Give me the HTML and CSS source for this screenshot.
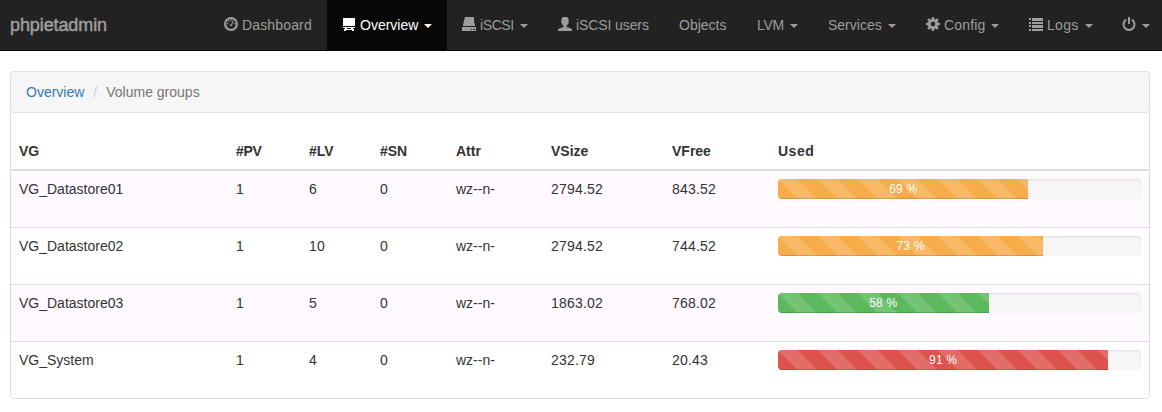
FILE: index.html
```html
<!DOCTYPE html>
<html lang="en">
<head>
<meta charset="utf-8">
<title>phpietadmin</title>
<link rel="stylesheet" href="styles.css">
</head>
<body>
<nav class="navbar">
  <a class="brand">phpietadmin</a>
  <ul class="nav">
    <li class="item w-dashboard"><svg class="icon" viewBox="0 0 14 14"><circle cx="7" cy="7" r="5.900" fill="none" stroke="currentColor" stroke-width="2.200"/><path d="M3 6h1.200v1.200H3zM4.300 3.500h1.200v1.200H4.300zM6.500 2.600h1.100v1.300H6.500zM9.800 6H11v1.200H9.800zM8.600 3.400l1.200.6-1.700 3.400.2 1.700H5.800V7.500h1.400z"/></svg><span>Dashboard</span></li>
    <li class="item active w-overview"><svg class="icon" viewBox="0 0 14 14"><path d="M1 1h12v8H1zM1 10h12v1H1zM3 11h2v1H3zM9 11h2v1H9zM2 12h10v1H2zM2 13h2v1H2zM10 13h2v1h-2z"/></svg><span>Overview</span><i class="caret"></i></li>
    <li class="item w-iscsi"><svg class="icon" viewBox="0 0 14 14"><path d="M3 0h9v4l1 4v1H1V8l1-4zM0 10h14v4H0z"/><path class="cut" d="M9 12h1v1H9zM11 12h2v1h-2z"/></svg><span>iSCSI</span><i class="caret"></i></li>
    <li class="item w-users"><svg class="icon" viewBox="0 0 14 14"><path d="M5 0h4l1.500 1.500V4l.5 1-1 2-1.500 2v1L13 11.500l1 1V14H0v-1.500l1-1L5.500 10V9L4 7 3 5l.5-1V1.500z"/></svg><span>iSCSI users</span></li>
    <li class="item w-objects"><span>Objects</span></li>
    <li class="item w-lvm"><span>LVM</span><i class="caret"></i></li>
    <li class="item w-services"><span>Services</span><i class="caret"></i></li>
    <li class="item w-config"><svg class="icon" viewBox="0 0 14 14"><path fill-rule="evenodd" d="M6 0h2l.4 2 1.100.5L11.200 1.300l1.500 1.500-1.200 1.700.5 1.100L14 6v2l-2 .4-.5 1.100 1.200 1.700-1.500 1.500-1.700-1.200-1.100.5L8 14H6l-.4-2-1.100-.5-1.700 1.200-1.500-1.500 1.200-1.700L2 8.400 0 8V6l2-.4.5-1.100-1.200-1.700 1.500-1.500 1.700 1.200L5.600 2zM7 4.700a2.300 2.300 0 1 0 0 4.600 2.300 2.300 0 0 0 0-4.600z"/></svg><span>Config</span><i class="caret"></i></li>
    <li class="item w-logs"><svg class="icon" viewBox="0 0 14 14"><path d="M0 1h2v2H0zM0 5h2v2H0zM0 8h2v2H0zM0 12h2v2H0zM3 1h11v3H3zM3 5h11v2H3zM3 8h11v3H3zM3 12h11v2H3z"/></svg><span>Logs</span><i class="caret"></i></li>
    <li class="item w-power"><svg class="icon" viewBox="0 0 14 14"><path d="M4.300 2.700a5.500 5.500 0 1 0 5.400 0M7 0v7" fill="none" stroke="currentColor" stroke-width="2"/></svg><i class="caret"></i></li>
  </ul>
</nav>
<main class="panel">
  <div class="breadcrumb"><a class="link">Overview</a><span class="slash">/</span><span>Volume groups</span></div>
  <table class="table">
    <colgroup><col class="c-vg"><col class="c-pv"><col class="c-lv"><col class="c-sn"><col class="c-attr"><col class="c-size"><col class="c-free"><col></colgroup>
    <thead><tr><th>VG</th><th class="count">#PV</th><th>#LV</th><th>#SN</th><th>Attr</th><th>VSize</th><th>VFree</th><th class="used">Used</th></tr></thead>
    <tbody>
      <tr><td class="name">VG_Datastore01</td><td>1</td><td>6</td><td>0</td><td class="attr">wz--n-</td><td>2794.52</td><td>843.52</td><td><div class="progress"><div class="bar warning" style="width:69%">69 %</div></div></td></tr>
      <tr><td class="name">VG_Datastore02</td><td>1</td><td>10</td><td>0</td><td class="attr">wz--n-</td><td>2794.52</td><td>744.52</td><td><div class="progress"><div class="bar warning" style="width:73%">73 %</div></div></td></tr>
      <tr><td class="name">VG_Datastore03</td><td>1</td><td>5</td><td>0</td><td class="attr">wz--n-</td><td>1863.02</td><td>768.02</td><td><div class="progress"><div class="bar success" style="width:58%">58 %</div></div></td></tr>
      <tr><td class="name">VG_System</td><td>1</td><td>4</td><td>0</td><td class="attr">wz--n-</td><td>232.79</td><td>20.43</td><td><div class="progress"><div class="bar danger" style="width:91%">91 %</div></div></td></tr>
    </tbody>
  </table>
</main>
</body>
</html>
```
FILE: styles.css
```css
* { box-sizing: border-box; }
body {
  margin: 0;
  background: #fff;
  color: #333;
  font: 14px/20px "Liberation Sans", Arial, sans-serif;
  overflow: hidden;
}
.navbar {
  display: flex;
  justify-content: space-between;
  height: 51px;
  background: #222;
  border-bottom: 1px solid #080808;
  color: #9d9d9d;
}
.brand {
  padding: 15px 10px;
  font-size: 18px;
  letter-spacing: -0.1px;
  -webkit-text-stroke: 0.5px currentColor;
}
.nav { display: flex; margin: 0; padding: 0; list-style: none; }
.item {
  display: flex;
  align-items: center;
  height: 50px;
  padding-left: 15px;
  white-space: nowrap;
}
.active { background: #080808; color: #fff; }
.icon {
  flex: none;
  width: 14px;
  height: 14px;
  margin: 0 4px 2px 0;
  fill: currentColor;
}
.cut { fill: #222; }
.caret {
  margin: 1px 0 0 6px;
  border-top: 4px solid currentColor;
  border-left: 4px solid transparent;
  border-right: 4px solid transparent;
}
.w-dashboard { width: 118px; letter-spacing: 0.15px; }
.w-overview { width: 120px; }
.w-iscsi { width: 96px; letter-spacing: -0.4px; }
.w-users { width: 121px; letter-spacing: -0.1px; }
.w-objects { width: 78px; }
.w-lvm { width: 71px; letter-spacing: -0.3px; }
.w-services { width: 98px; }
.w-config { width: 103px; letter-spacing: 0.15px; }
.w-logs { width: 93px; letter-spacing: 0.3px; }
.w-power { width: 55px; }
.w-power .caret { margin-left: 2px; }

.panel {
  width: 1140px;
  height: 328px;
  margin: 20px 0 0 10px;
  border: 1px solid #ddd;
  border-radius: 4px;
  overflow: hidden;
}
.breadcrumb {
  display: flex;
  height: 41px;
  padding: 10px 15px;
  margin-bottom: 20px;
  background: #f6f6f6;
  border-bottom: 1px solid #ddd;
  border-radius: 0 0 4px 4px;
  color: #777;
}
.link { color: #337ab7; }
.slash { padding: 0 9px; color: #ccc; }

.table { width: 1138px; table-layout: fixed; border-collapse: separate; border-spacing: 0; }
.table th { padding: 8px; text-align: left; border-bottom: 2px solid #ddd; }
.table .count { letter-spacing: -0.3px; }
.table .used { letter-spacing: 0.5px; }
.table td { height: 57px; padding: 8px; vertical-align: top; border-bottom: 1px solid #ddd; letter-spacing: 0.2px; }
.table .name, .table .attr { letter-spacing: 0; }
.table tbody tr:nth-child(odd) { background: #fefaff; }
.c-vg { width: 217px; }
.c-pv { width: 73px; }
.c-lv { width: 71px; }
.c-sn { width: 76px; }
.c-attr { width: 95px; }
.c-size { width: 121px; }
.c-free { width: 106px; }

.progress {
  height: 20px;
  background: #f6f6f6;
  border-radius: 4px;
  overflow: hidden;
  box-shadow: inset 0 1px 2px rgba(0, 0, 0, 0.1);
}
.bar {
  height: 100%;
  color: #fff;
  font-size: 12px;
  text-align: center;
  background-image: linear-gradient(45deg, rgba(255, 255, 255, 0.15) 25%, transparent 25%, transparent 50%, rgba(255, 255, 255, 0.15) 50%, rgba(255, 255, 255, 0.15) 75%, transparent 75%, transparent);
  background-size: 40px 40px;
  box-shadow: inset 0 -1px 0 rgba(0, 0, 0, 0.15);
}
.warning { background-color: #f7ac4a; }
.success { background-color: #5cb85c; }
.danger { background-color: #dd524c; }
```
